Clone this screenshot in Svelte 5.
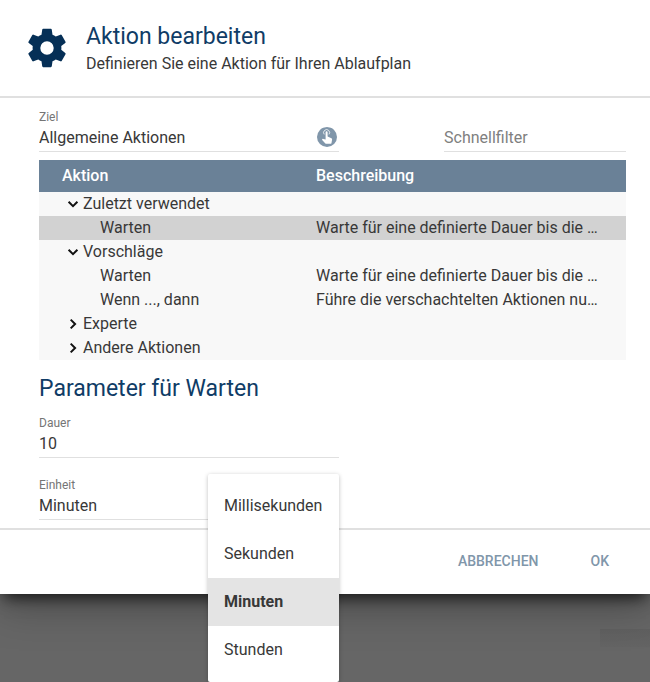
<script lang="ts">
	type Row = { name: string; description?: string; group?: boolean; open?: boolean; selected?: boolean };

	let rows = $state<Row[]>([
		{ name: 'Zuletzt verwendet', group: true, open: true },
		{ name: 'Warten', description: 'Warte für eine definierte Dauer bis die …', selected: true },
		{ name: 'Vorschläge', group: true, open: true },
		{ name: 'Warten', description: 'Warte für eine definierte Dauer bis die …' },
		{ name: 'Wenn ..., dann', description: 'Führe die verschachtelten Aktionen nu…' },
		{ name: 'Experte', group: true, open: false },
		{ name: 'Andere Aktionen', group: true, open: false }
	]);

	const units = ['Millisekunden', 'Sekunden', 'Minuten', 'Stunden'];

	let target = $state('Allgemeine Aktionen');
	let filter = $state('');
	let duration = $state('10');
	let unit = $state('Minuten');
	let menuOpen = $state(true);

	// rows below a collapsed group stay hidden until the next group
	let visibleRows = $derived.by(() => {
		let open = true;
		return rows.filter((row) => {
			if (row.group) {
				open = !!row.open;
				return true;
			}
			return open;
		});
	});

	function select(row: Row) {
		for (const r of rows) r.selected = false;
		row.selected = true;
	}

	function pickUnit(u: string) {
		unit = u;
		menuOpen = false;
	}
</script>

<div class="page">
	<div class="dialog" role="dialog" aria-labelledby="dialog-title">
		<header>
			<svg class="gear" viewBox="0 0 24 24" aria-hidden="true">
				<path d="M12 15.5A3.5 3.5 0 0 1 8.5 12 3.5 3.5 0 0 1 12 8.5a3.5 3.5 0 0 1 3.5 3.5 3.5 3.5 0 0 1-3.5 3.5m7.43-2.53c.04-.32.07-.64.07-.97s-.03-.66-.07-1l2.11-1.63c.19-.15.24-.42.12-.64l-2-3.46c-.12-.22-.39-.31-.61-.22l-2.49 1c-.52-.39-1.06-.73-1.69-.98l-.37-2.65A.506.506 0 0 0 14 2h-4c-.25 0-.46.18-.5.42l-.37 2.65c-.63.25-1.17.59-1.69.98l-2.49-1c-.22-.09-.49 0-.61.22l-2 3.46c-.13.22-.07.49.12.64L4.57 11c-.04.34-.07.67-.07 1s.03.65.07.97l-2.11 1.66c-.19.15-.25.42-.12.64l2 3.46c.12.22.39.3.61.22l2.49-1.01c.52.4 1.06.74 1.69.99l.37 2.65c.04.24.25.42.5.42h4c.25 0 .46-.18.5-.42l.37-2.65c.63-.26 1.17-.59 1.69-.99l2.49 1.01c.22.08.49 0 .61-.22l2-3.46c.12-.22.07-.49-.12-.64z" />
			</svg>
			<div>
				<h1 id="dialog-title">Aktion bearbeiten</h1>
				<p>Definieren Sie eine Aktion für Ihren Ablaufplan</p>
			</div>
		</header>

		<main>
			<div class="top-fields">
				<div class="field">
					<label for="target">Ziel</label>
					<div class="control">
						<input id="target" type="text" bind:value={target} />
						<button class="pick" type="button" aria-label="Ziel auswählen">
							<svg viewBox="0 0 20 20" aria-hidden="true">
								<circle cx="10" cy="10" r="10" fill="#8096aa" />
								<path d="M7.2 7.4A3 3 0 1 1 12 7.4" fill="none" stroke="#fff" stroke-opacity="0.8" stroke-width="1" />
								<path d="M8.6 5.3a1 1 0 0 1 2 0v4.3l3.8 1.6c.6.3.8.7.7 1.3l-.6 3.4c-.1.6-.5.9-1.1.9H9.4c-.4 0-.7-.1-1-.4l-3.5-3.7.6-.6c.2-.2.5-.3.8-.2l2.3.6z" fill="#fff" />
							</svg>
						</button>
					</div>
				</div>
				<div class="control filter">
					<input type="text" placeholder="Schnellfilter" aria-label="Schnellfilter" bind:value={filter} />
				</div>
			</div>

			<table>
				<thead>
					<tr>
						<th class="name">Aktion</th>
						<th>Beschreibung</th>
					</tr>
				</thead>
				<tbody>
					{#each visibleRows as row}
						{#if row.group}
							<tr>
								<td colspan="2">
									<button class="group" type="button" aria-expanded={row.open} onclick={() => (row.open = !row.open)}>
										<svg class:open={row.open} viewBox="0 0 14 14" aria-hidden="true">
											<path d="M4.7 2.6L9.100 7l-4.400 4.400" />
										</svg>
										{row.name}
									</button>
								</td>
							</tr>
						{:else}
							<tr class:selected={row.selected} onclick={() => select(row)}>
								<td class="item">{row.name}</td>
								<td class="description">{row.description}</td>
							</tr>
						{/if}
					{/each}
				</tbody>
			</table>

			<h2>Parameter für Warten</h2>

			<div class="field">
				<label for="duration">Dauer</label>
				<div class="control">
					<input id="duration" type="text" inputmode="numeric" bind:value={duration} />
				</div>
			</div>

			<div class="field unit">
				<label for="unit">Einheit</label>
				<div class="control">
					<select id="unit" bind:value={unit} onfocus={() => (menuOpen = true)}>
						{#each units as u}
							<option>{u}</option>
						{/each}
					</select>
				</div>
				{#if menuOpen}
					<div class="menu">
						{#each units as u}
							<button type="button" class:active={u === unit} onclick={() => pickUnit(u)}>{u}</button>
						{/each}
					</div>
				{/if}
			</div>
		</main>

		<footer>
			<button type="button">Abbrechen</button>
			<button type="button">OK</button>
		</footer>
	</div>
	<div class="behind"></div>
</div>

<style>
	:global(body) {
		background: #666;
	}
	.page {
		min-height: 100vh;
		box-sizing: border-box;
		font-family: Roboto, 'Liberation Sans', sans-serif;
		font-size: 16px;
		line-height: 24px;
		color: #383838;
	}
	.page * {
		box-sizing: border-box;
	}
	button,
	input,
	select {
		margin: 0;
		padding: 0;
		border: none;
		background: none;
		font: inherit;
		color: inherit;
		outline: none;
	}
	button {
		cursor: pointer;
	}
	.dialog {
		position: relative;
		z-index: 1;
		background: #fff;
		box-shadow:
			0 8px 14px -4px rgba(0, 0, 0, 0.7),
			0 14px 38px 0 rgba(0, 0, 0, 0.25);
	}
	header {
		display: flex;
		align-items: center;
		gap: 16px;
		height: 98px;
		padding: 0 24px;
		border-bottom: 2px solid #e0e0e0;
	}
	.gear {
		width: 46px;
		height: 46px;
		fill: #052f56;
	}
	h1,
	h2 {
		margin: 0;
		padding-top: 2px;
		font-size: 23px;
		line-height: 30px;
		font-weight: 400;
		color: #0f3c66;
	}
	p {
		margin: 0;
	}
	main {
		padding: 10px 24px 8px 39px;
	}
	.top-fields {
		display: flex;
		justify-content: space-between;
		align-items: flex-end;
		margin-bottom: 8px;
	}
	.field {
		position: relative;
		width: 300px;
	}
	.field label {
		display: block;
		font-size: 12px;
		line-height: 18px;
		color: #757575;
	}
	.control {
		display: flex;
		align-items: flex-start;
		height: 26px;
		border-bottom: 1px solid #e0e0e0;
	}
	.filter {
		width: 182px;
	}
	.control input,
	.control select {
		flex: 1;
		min-width: 0;
		height: 24px;
		appearance: none;
	}
	.filter input::placeholder {
		color: #808080;
		opacity: 1;
	}
	.pick {
		width: 20px;
		height: 20px;
		margin: 1px 2px 0 0;
	}
	.pick svg {
		display: block;
	}
	table {
		width: 100%;
		table-layout: fixed;
		border-collapse: collapse;
		background: #f8f8f8;
	}
	th {
		height: 32px;
		padding: 0;
		text-align: left;
		font-weight: 500;
		color: #fff;
		background: #6a8197;
	}
	th.name {
		width: 277px;
		padding-left: 23px;
	}
	td {
		height: 24px;
		padding: 0;
		white-space: nowrap;
	}
	.item {
		padding-left: 61px;
	}
	.description {
		padding-right: 24px;
		overflow: hidden;
		text-overflow: ellipsis;
	}
	.selected {
		background: #d2d2d2;
	}
	.group {
		display: flex;
		align-items: center;
		gap: 3px;
		padding-left: 27px;
	}
	.group svg {
		width: 14px;
		height: 14px;
		fill: none;
		stroke: #111;
		stroke-width: 2;
	}
	.group svg.open {
		transform: rotate(90deg);
	}
	h2 {
		margin: 12px 0 10px;
	}
	.unit {
		margin-top: 18px;
	}
	.menu {
		position: absolute;
		top: -2px;
		right: 0;
		min-width: 131px;
		padding: 8px 0;
		background: #fff;
		border-radius: 2px;
		box-shadow: 0 1px 4px rgba(0, 0, 0, 0.25);
	}
	.menu button {
		display: block;
		width: 100%;
		height: 48px;
		padding: 0 16px;
		text-align: left;
	}
	.menu .active {
		font-weight: 700;
		background: #e4e4e4;
	}
	footer {
		display: flex;
		justify-content: flex-end;
		align-items: center;
		gap: 18px;
		height: 66px;
		padding: 0 24px 2px;
		border-top: 2px solid #e0e0e0;
	}
	footer button {
		height: 36px;
		padding: 0 17px;
		font-size: 14px;
		font-weight: 500;
		text-transform: uppercase;
		color: #8096aa;
	}
	.behind {
		width: 50px;
		height: 18px;
		margin: 35px 0 0 auto;
		background: linear-gradient(#606060, #646464);
	}
</style>
